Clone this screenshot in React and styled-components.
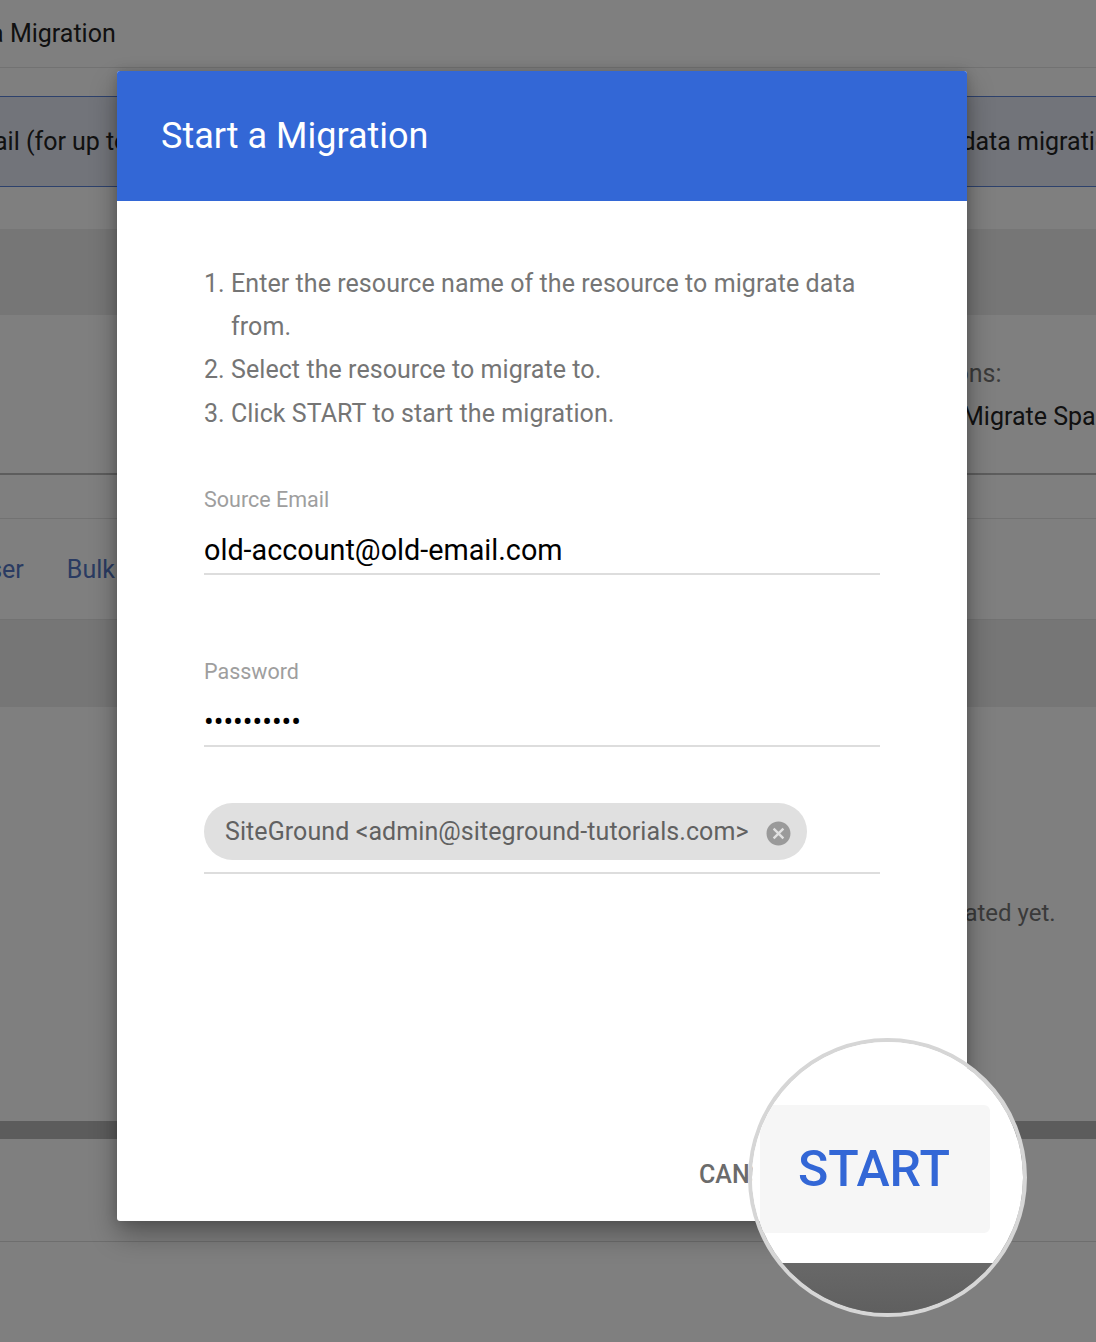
import React from "react";
import styled, { createGlobalStyle } from "styled-components";

const GlobalStyle = createGlobalStyle`
    html, body {
        margin: 0;
        padding: 0;
        background: #fff;
    }
    * {
        box-sizing: border-box;
    }
    body {
        font-family: Roboto, "Liberation Sans", sans-serif;
    }
`;

const CloseIcon = () => (
    <svg width="25" height="25" viewBox="0 0 24 24">
        <path
            fill="#9a9a9a"
            d="M12 0.5C5.6 0.5 0.5 5.6 0.5 12S5.6 23.500 12 23.500 23.500 18.400 23.500 12 18.400 0.500 12 0.500zM17.500 15.900L15.900 17.500 12 13.600 8.100 17.500 6.500 15.900 10.400 12 6.500 8.100 8.100 6.500 12 10.400 15.900 6.500 17.500 8.100 13.600 12z"
        />
    </svg>
);

const App = () => {
    return (
        <Page>
            <GlobalStyle />
            <TopBar>
                <TopTitle>Start a Migration</TopTitle>
            </TopBar>
            <Banner>
                <BannerLeft>Gmail (for up to</BannerLeft>
                <BannerRight>data migration</BannerRight>
            </Banner>
            <Band height={86} />
            <OptionsPanel>
                <OptionsLabel>Options:</OptionsLabel>
                <OptionsValue>Migrate Spam</OptionsValue>
            </OptionsPanel>
            <Tabs>
                <TabUser>User</TabUser>
                <TabLink>Bulk</TabLink>
            </Tabs>
            <Band height={87} />
            <EmptyState>
                <EmptyText>Nothing migrated yet.</EmptyText>
            </EmptyState>
            <Band height={18} dark />
            <BottomRow />

            <Scrim>
                <Dialog>
                    <DialogHeader>Start a Migration</DialogHeader>
                    <DialogBody>
                        <Steps>
                            <li>Enter the resource name of the resource to migrate data from.</li>
                            <li>Select the resource to migrate to.</li>
                            <li>Click START to start the migration.</li>
                        </Steps>
                        <Fields>
                            <div>
                                <FieldLabel>Source Email</FieldLabel>
                                <FieldValue>old-account@old-email.com</FieldValue>
                            </div>
                            <div>
                                <FieldLabel>Password</FieldLabel>
                                <FieldValue>••••••••••</FieldValue>
                            </div>
                        </Fields>
                        <ChipField>
                            <Chip>
                                SiteGround &lt;admin@siteground-tutorials.com&gt;
                                <CloseIcon />
                            </Chip>
                        </ChipField>
                    </DialogBody>
                    <DialogFooter>
                        <CancelButton>CANCEL</CancelButton>
                    </DialogFooter>
                </Dialog>
            </Scrim>

            <Lens>
                <LensDialog>
                    <LensButton>START</LensButton>
                </LensDialog>
                <LensShadow />
            </Lens>
        </Page>
    );
};

const Page = styled.div`
    position: relative;
    width: 1096px;
    height: 1342px;
    overflow: hidden;
    background: #fff;
    color: #222;
    font-size: 25px;
    white-space: nowrap;
`;

const TopBar = styled.div`
    height: 68px;
    display: flex;
    align-items: center;
    border-bottom: 1px solid #e4e4e4;
`;

const TopTitle = styled.div`
    margin-left: -70px;
`;

const Banner = styled.div`
    height: 91px;
    margin: 28px 0 42px;
    display: flex;
    align-items: center;
    justify-content: space-between;
    background: #e4e8f4;
    border-top: 1px solid #5b82d8;
    border-bottom: 1px solid #5b82d8;
`;

const BannerLeft = styled.span`
    margin-left: -45px;
`;

const BannerRight = styled.span`
    margin-right: -27px;
`;

const Band = styled.div`
    height: ${props => props.height}px;
    background: ${props => props.dark ? "#b8b8b8" : "#ececec"};
    flex-shrink: 0;
`;

const OptionsPanel = styled.div`
    height: 160px;
    padding: 44px 0 0 962px;
    border-bottom: 2px solid #bbb;
    display: flex;
    flex-direction: column;
    gap: 14px;
`;

const OptionsLabel = styled.div`
    margin-left: -53px;
    color: #757575;
`;

const OptionsValue = styled.div``;

const Tabs = styled.div`
    height: 102px;
    margin-top: 43px;
    display: flex;
    align-items: center;
    gap: 43px;
    border-top: 1px solid #e4e4e4;
    border-bottom: 1px solid #e4e4e4;
`;

const TabUser = styled.span`
    margin-left: -27px;
    color: #5476c4;
`;

const TabLink = styled.span`
    color: #5476c4;
`;

const EmptyState = styled.div`
    height: 414px;
    padding: 192px 0 0 826px;
`;

const EmptyText = styled.div`
    color: #757575;
    font-size: 24px;
`;

const BottomRow = styled.div`
    height: 103px;
    border-bottom: 1px solid #ddd;
`;

const Scrim = styled.div`
    position: absolute;
    inset: 0;
    background: rgba(0, 0, 0, 0.5);
    padding: 71px 0 0 117px;
`;

const Dialog = styled.div`
    width: 850px;
    height: 1150px;
    background: #fff;
    border-radius: 3px;
    display: flex;
    flex-direction: column;
    box-shadow: 0 14px 28px rgba(0, 0, 0, 0.32), 0 0 12px rgba(0, 0, 0, 0.16);
`;

const DialogHeader = styled.div`
    height: 130px;
    flex-shrink: 0;
    padding-left: 44px;
    display: flex;
    align-items: center;
    background: #3367d6;
    color: #fff;
    font-size: 36px;
    border-radius: 3px 3px 0 0;
`;

const DialogBody = styled.div`
    padding: 61px 87px 0;
    flex: 1;
    white-space: normal;
`;

const Steps = styled.ol`
    margin: 0 0 50px;
    padding: 0 0 0 27px;
    color: #757575;
    font-size: 25px;
    letter-spacing: 0.07px;
    line-height: 43.200px;
`;

const Fields = styled.div`
    display: flex;
    flex-direction: column;
    gap: 82px;
`;

const FieldLabel = styled.div`
    color: #9e9e9e;
    font-size: 21.500px;
    line-height: 30px;
`;

const FieldValue = styled.div`
    margin-top: 15px;
    height: 45px;
    color: #000;
    font-size: 28.750px;
    line-height: 40px;
    border-bottom: 2px solid #ddd;
`;

const ChipField = styled.div`
    height: 71px;
    margin-top: 56px;
    border-bottom: 2px solid #ddd;
`;

const Chip = styled.div`
    display: inline-flex;
    align-items: center;
    gap: 17px;
    height: 57px;
    padding: 0 16px 0 21px;
    border-radius: 29px;
    background: #e0e0e0;
    color: #616161;
    font-size: 25px;
    letter-spacing: 0.08px;
    white-space: nowrap;

    svg {
        margin-top: 4px;
    }
`;

const DialogFooter = styled.div`
    height: 96px;
    flex-shrink: 0;
    padding: 25px 0 0 582px;
`;

const CancelButton = styled.div`
    color: #6b6b6b;
    font-size: 25px;
    font-weight: 500;
    line-height: 50px;
`;

const Lens = styled.div`
    position: absolute;
    left: 748px;
    top: 1038px;
    width: 279px;
    height: 279px;
    border-radius: 50%;
    border: 4px solid #d6d6d6;
    overflow: hidden;
    display: flex;
    flex-direction: column;
`;

const LensDialog = styled.div`
    height: 221px;
    flex-shrink: 0;
    background: #fff;
    padding: 63px 33px 0 8px;
`;

const LensButton = styled.div`
    height: 128px;
    background: #f6f6f6;
    border-radius: 6px;
    display: flex;
    align-items: center;
    padding-left: 38px;
    color: #3367d6;
    font-size: 50px;
    font-weight: 500;
`;

const LensShadow = styled.div`
    flex: 1;
    background: linear-gradient(#686868, #5f5f5f);
`;

export default App;
